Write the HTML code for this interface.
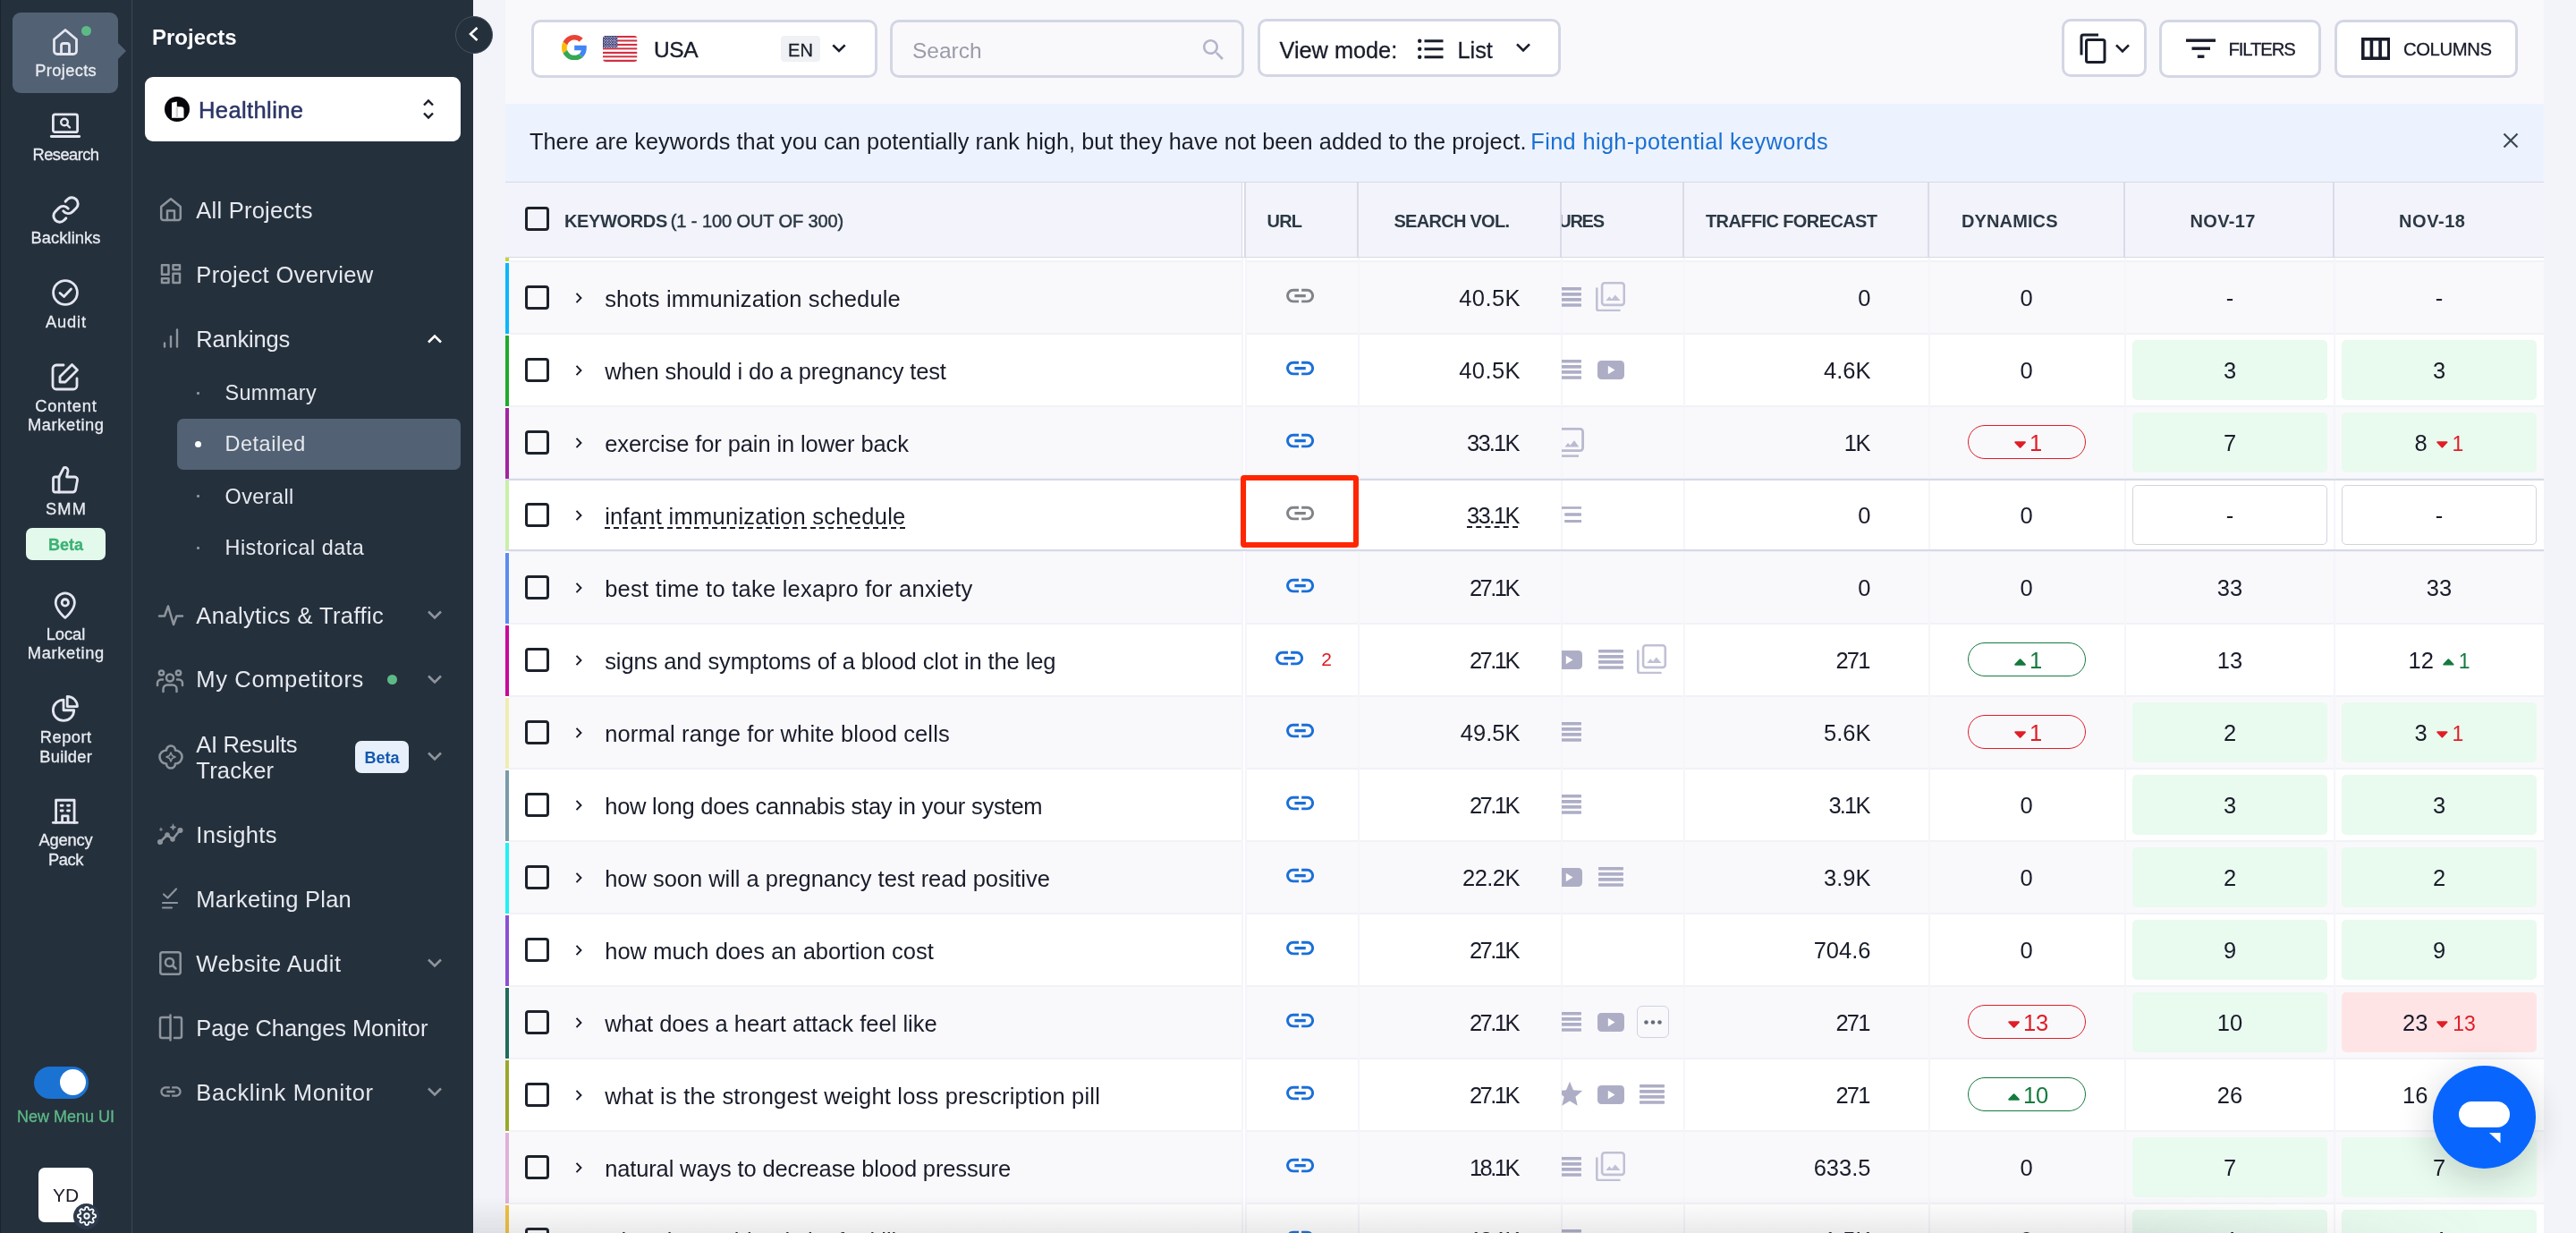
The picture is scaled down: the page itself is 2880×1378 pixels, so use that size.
<!DOCTYPE html>
<html lang="en"><head><meta charset="utf-8"><title>Rankings - Detailed</title>
<style>
*{box-sizing:border-box}
html,body{margin:0;padding:0}
body{width:2880px;height:1378px;overflow:hidden;position:relative;background:#f3f4f9;font-family:"Liberation Sans",sans-serif;color:#191c2a}
#wrap{position:absolute;left:0;top:0;width:2880px;height:1378px;overflow:hidden;will-change:transform;opacity:.9999}
.abs{position:absolute}
#nav1{position:absolute;left:0;top:0;width:147px;height:1378px;background:#25303d;border-left:1px solid #1b232d}
#navline{position:absolute;left:147px;top:0;width:1px;height:1378px;background:#3b4754}
#nav2{position:absolute;left:148px;top:0;width:381px;height:1378px;background:#25303d}
.il{position:absolute;left:0;width:147px;text-align:center;color:#e9ecf1;-webkit-text-stroke-width:.3px;font-size:18.500px;line-height:22px;white-space:nowrap}
.mi{position:absolute;left:219.300px;color:#e6e9ee;font-size:25.500px;line-height:30px;white-space:nowrap}
.si{position:absolute;left:251.500px;color:#e6e9ee;font-size:23.400px;line-height:28px;white-space:nowrap}
#main{position:absolute;left:565px;top:0;width:2279px;height:1378px;background:#f9f9fc;overflow:hidden}
.tbox{position:absolute;border:3px solid #d3d6e4;border-radius:9px;background:#fff}
.row{position:absolute;left:569px;width:2275px;height:79px}
.sep{position:absolute;left:569px;width:2275px;height:2px;background:#f1f2f7}
.bar{position:absolute;left:565px;width:4px;height:79px}
.cb{position:absolute;left:587.200px;width:27px;height:27px;border:3px solid #1c212b;border-radius:4px}
.kw{position:absolute;left:676.200px;font-size:25.500px;line-height:38px;white-space:nowrap;color:#191c2a}
.sv{position:absolute;left:1530px;width:168.500px;text-align:right;font-size:25.500px;line-height:38px;white-space:nowrap}
.tf{position:absolute;left:1890px;width:201.500px;text-align:right;font-size:25.500px;line-height:38px;white-space:nowrap}
.dy{position:absolute;left:2156px;width:219px;white-space:nowrap;text-align:center;font-size:25.500px;line-height:38px}
.pill{position:absolute;left:2200px;width:132px;height:38px;border:1.500px solid;border-radius:19px}
.cell{position:absolute;width:218px;height:67px;border-radius:5px}
.cellt{position:absolute;width:218px;text-align:center;font-size:25.500px;line-height:38px;white-space:nowrap}
.chg{font-size:23px;margin-left:10px}
.two{position:absolute;left:1473px;width:20px;text-align:center;color:#e0161e;font-size:21px;line-height:28px}
.fclip{position:absolute;left:1746px;width:135px;height:80px;overflow:hidden}
.hov{text-decoration:underline dashed;text-decoration-thickness:2px;text-underline-offset:3px}
.vline{position:absolute;top:288px;width:2px;height:1090px;background:#f5f5fa}
.hl{position:absolute;top:204px;width:2px;height:83px;background:#d9dbe7}
.th{position:absolute;top:233px;font-size:19px;font-weight:700;line-height:26px;color:#2b3944;white-space:nowrap}
</style></head><body>
<div id="wrap">

<!-- ===== icon bar ===== -->
<div id="nav1"></div><div id="navline"></div><div id="nav2"></div>
<div class="abs" style="left:14px;top:14px;width:118px;height:90px;border-radius:9px;background:#526173"></div>
<svg class="abs" style="left:131px;top:47px" width="11" height="20" viewBox="0 0 11 20"><path d="M0 0 L10 10 L0 20Z" fill="#526173"/></svg>
<div class="abs" style="left:91px;top:29px;width:11px;height:11px;border-radius:50%;background:#5dba87"></div>
<svg style="position:absolute;left:58px;top:31px" width="30" height="32" viewBox="0 0 30 32" fill="none" stroke="#e4e6f0" stroke-width="2.8" stroke-linecap="round" stroke-linejoin="round" ><path d="M2.500 13 L15 2.500 L27.500 13 V26 a3.500 3.500 0 0 1 -3.500 3.500 H6 a3.500 3.500 0 0 1 -3.500 -3.500 Z"/><path d="M10.500 29 V20 a2.500 2.500 0 0 1 2.500 -2.500 h4 a2.500 2.500 0 0 1 2.500 2.500 V29"/></svg>
<svg style="position:absolute;left:55px;top:124px" width="36" height="31" viewBox="0 0 36 31" fill="none" stroke="#e4e6f0" stroke-width="2.8" stroke-linecap="round" stroke-linejoin="round" ><rect x="4.400" y="3.900" width="27.200" height="19.800" rx="2"/><path d="M2.300 28.500 H33.700"/><circle cx="17" cy="12.500" r="3.800" stroke-width="2.400"/><path d="M20 15.500 L23 18.500" stroke-width="2.400"/></svg>
<svg style="position:absolute;left:56.5px;top:217.5px" width="33" height="33" viewBox="0 0 24 24" fill="none" stroke="#e4e6f0" stroke-width="2.15" stroke-linecap="round" stroke-linejoin="round" ><path d="M10 13a5 5 0 0 0 7.540.540l3-3a5 5 0 0 0-7.070-7.070l-1.720 1.710"/><path d="M14 11a5 5 0 0 0-7.540-.540l-3 3a5 5 0 0 0 7.070 7.070l1.710-1.710"/></svg>
<svg style="position:absolute;left:56px;top:310px" width="34" height="34" viewBox="0 0 34 34" fill="none" stroke="#e4e6f0" stroke-width="2.8" stroke-linecap="round" stroke-linejoin="round" ><circle cx="17" cy="17" r="13.400"/><path d="M11 17.500 L15.500 21.500 L23.500 13"/></svg>
<svg style="position:absolute;left:56px;top:404px" width="34" height="34" viewBox="0 0 34 34" fill="none" stroke="#e4e6f0" stroke-width="2.8" stroke-linecap="round" stroke-linejoin="round" ><path d="M15 4 H7 a4 4 0 0 0 -4 4 V27 a4 4 0 0 0 4 4 H26 a4 4 0 0 0 4 -4 V19"/><path d="M24.500 3.500 L30.500 9.500 L17 23 H11 V17 Z"/></svg>
<svg style="position:absolute;left:56px;top:519px" width="34" height="34" viewBox="0 0 34 34" fill="none" stroke="#e4e6f0" stroke-width="2.8" stroke-linecap="round" stroke-linejoin="round" ><path d="M3.500 16 a2 2 0 0 1 2 -2 H10 V31 H5.500 a2 2 0 0 1 -2 -2 Z"/><path d="M10 14 L15.500 3.500 a3.500 3.500 0 0 1 4.500 4 L18.500 14 H27.500 a3 3 0 0 1 3 3.600 L28.500 28.400 a3.300 3.300 0 0 1 -3.200 2.600 H10"/></svg>
<div class="abs" style="left:29px;top:590px;width:89px;height:36px;border-radius:7px;background:#e3f9ec"></div>
<svg style="position:absolute;left:59.2px;top:661.3px" width="27.6" height="31.3" viewBox="0 0 30 34" fill="none" stroke="#e4e6f0" stroke-width="3" stroke-linecap="round" stroke-linejoin="round" ><path d="M15 32 C15 32 26.500 22.500 26.500 13.500 a11.500 11.500 0 0 0 -23 0 C3.500 22.500 15 32 15 32 Z"/><circle cx="15" cy="13.500" r="4"/></svg>
<svg style="position:absolute;left:57.3px;top:776.1px" width="31.8" height="31.8" viewBox="0 0 34 34" fill="none" stroke="#e4e6f0" stroke-width="3" stroke-linecap="round" stroke-linejoin="round" ><path d="M15 6.500 A12.500 12.500 0 1 0 27.500 19 H15 Z"/><path d="M19.500 2.500 A12 12 0 0 1 31.500 14.500 H19.500 Z"/></svg>
<svg style="position:absolute;left:57.3px;top:891.2px" width="31.7" height="31.7" viewBox="0 0 34 34" fill="none" stroke="#e4e6f0" stroke-width="3" stroke-linecap="round" stroke-linejoin="round" ><path d="M6 30.500 V3.500 H28 V30.500"/><path d="M2.500 30.500 H31.500"/><path d="M13.500 30 V22.500 H20.500 V30"/><path d="M12 10 h2 M20 10 h2 M12 16 h2 M20 16 h2" stroke-width="3.200"/></svg>
<div class="il" style="top:68.06px;font-size:18.300px;letter-spacing:0.350px;padding-left:0.35px">Projects</div>
<div class="il" style="top:161.86px;font-size:18.300px;letter-spacing:-0.536px;padding-left:0.00px">Research</div>
<div class="il" style="top:254.86px;font-size:18.300px;letter-spacing:0.085px;padding-left:0.09px">Backlinks</div>
<div class="il" style="top:348.86px;font-size:18.300px;letter-spacing:0.857px;padding-left:0.86px">Audit</div>
<div class="il" style="top:443.16px;font-size:18.300px;letter-spacing:0.745px;padding-left:0.74px">Content</div>
<div class="il" style="top:464.06px;font-size:18.300px;letter-spacing:0.602px;padding-left:0.60px">Marketing</div>
<div class="il" style="top:557.66px;font-size:18.300px;letter-spacing:1.222px;padding-left:1.22px">SMM</div>
<div class="il" style="top:697.86px;font-size:18.300px;letter-spacing:-0.005px;padding-left:0.00px">Local</div>
<div class="il" style="top:719.46px;font-size:18.300px;letter-spacing:0.652px;padding-left:0.65px">Marketing</div>
<div class="il" style="top:812.86px;font-size:18.300px;letter-spacing:0.485px;padding-left:0.48px">Report</div>
<div class="il" style="top:834.56px;font-size:18.300px;letter-spacing:0.266px;padding-left:0.27px">Builder</div>
<div class="il" style="top:927.86px;font-size:18.300px;letter-spacing:-0.137px;padding-left:0.00px">Agency</div>
<div class="il" style="top:949.86px;font-size:18.300px;letter-spacing:-0.385px;padding-left:0.00px">Pack</div>
<div class="il" style="top:598.06px;font-size:18px;font-weight:700;color:#3bb273">Beta</div>
<div class="abs" style="left:38px;top:1191.500px;width:61px;height:36.500px;border-radius:19px;background:#1a73d2"></div>
<div class="abs" style="left:66.700px;top:1194.500px;width:29.600px;height:29.600px;border-radius:50%;background:#fff"></div>
<div class="il" style="top:1237.16px;font-size:18px;color:#5dba87">New Menu UI</div>
<div class="abs" style="left:43px;top:1305px;width:61px;height:61px;border-radius:7px;background:#fff"></div>
<div class="abs" style="left:43px;width:61px;text-align:center;top:1323.02px;font-size:21px;line-height:26px;color:#191c2a">YD</div>
<div class="abs" style="left:82px;top:1344.500px;width:29px;height:29px;border-radius:50%;background:#2d3a4c"></div>
<svg style="position:absolute;left:85.5px;top:1348px" width="22" height="22" viewBox="0 0 24 24" fill="none" stroke="#fff" stroke-width="2" stroke-linecap="round" stroke-linejoin="round" ><path d="M19.400 15a1.650 1.650 0 0 0 .330 1.820l.060.060a2 2 0 1 1-2.830 2.830l-.060-.060a1.650 1.650 0 0 0-1.820-.330 1.650 1.650 0 0 0-1 1.510V21a2 2 0 0 1-4 0v-.090A1.650 1.650 0 0 0 9 19.400a1.650 1.650 0 0 0-1.820.330l-.060.060a2 2 0 1 1-2.830-2.830l.060-.060a1.650 1.650 0 0 0 .330-1.820 1.650 1.650 0 0 0-1.510-1H3a2 2 0 0 1 0-4h.090A1.650 1.650 0 0 0 4.600 9a1.650 1.650 0 0 0-.330-1.820l-.060-.060a2 2 0 1 1 2.830-2.830l.060.060a1.650 1.650 0 0 0 1.820.330H9a1.650 1.650 0 0 0 1-1.510V3a2 2 0 0 1 4 0v.090a1.650 1.650 0 0 0 1 1.510 1.650 1.650 0 0 0 1.820-.330l.060-.060a2 2 0 1 1 2.830 2.830l-.060.060a1.650 1.650 0 0 0-.330 1.820V9a1.650 1.650 0 0 0 1.510 1H21a2 2 0 0 1 0 4h-.090a1.650 1.650 0 0 0-1.510 1z"/><circle cx="12" cy="12" r="3"/></svg>
<div class="abs" style="left:170px;top:27.48px;font-size:24px;line-height:30px;font-weight:700;color:#fff">Projects</div>
<div class="abs" style="left:509px;top:18px;width:42px;height:42px;border-radius:50%;background:#25303d;border:1px solid #46525f"></div>
<svg class="abs" style="left:523px;top:29px" width="13" height="18" viewBox="0 0 13 18" fill="none" stroke="#fff" stroke-width="2.600"><path d="M10.500 2 L3 9 L10.500 16"/></svg>
<div class="abs" style="left:162px;top:86px;width:353px;height:72px;border-radius:9px;background:#fff"></div>
<div class="abs" style="left:184px;top:107.600px;width:28px;height:28px;border-radius:50%;background:#05070a"></div>
<svg class="abs" style="left:184px;top:107.600px" width="28" height="28" viewBox="0 0 28 28"><path d="M8 6.800 L13.800 5.600 V11.300 H18.300 a3.200 3.200 0 0 1 3.200 3.200 V23.800 H8Z" fill="#fff"/><path d="M12.600 12 H15 V23.800 H12.600Z" fill="#d4d4d4"/></svg>
<div class="abs" style="left:222px;top:106.86px;font-size:25.500px;line-height:32px;color:#2c3566;letter-spacing:.4px;-webkit-text-stroke:.5px #2c3566">Healthline</div>
<svg class="abs" style="left:471.200px;top:109px" width="16" height="26" viewBox="0 0 16 26" fill="none" stroke="#191c2a" stroke-width="2.400"><path d="M3 8.500 L8 3.500 L13 8.500 M3 17.500 L8 22.500 L13 17.500"/></svg>
<div class="abs" style="left:198px;top:468px;width:317px;height:57px;border-radius:7px;background:#526173"></div>
<div class="mi" style="top:220.06px;letter-spacing:0.241px">All Projects</div>
<div class="mi" style="top:292.06px;letter-spacing:0.338px">Project Overview</div>
<div class="mi" style="top:364.06px;letter-spacing:-0.202px">Rankings</div>
<div class="mi" style="top:672.86px;letter-spacing:0.406px">Analytics &amp; Traffic</div>
<div class="mi" style="top:744.36px;letter-spacing:0.650px">My Competitors</div>
<div class="mi" style="top:816.96px;letter-spacing:-0.347px">AI Results</div>
<div class="mi" style="top:846.16px;letter-spacing:0.219px">Tracker</div>
<div class="mi" style="top:918.16px;letter-spacing:0.316px">Insights</div>
<div class="mi" style="top:989.76px;letter-spacing:0.262px">Marketing Plan</div>
<div class="mi" style="top:1061.76px;letter-spacing:0.521px">Website Audit</div>
<div class="mi" style="top:1133.86px;letter-spacing:-0.091px">Page Changes Monitor</div>
<div class="mi" style="top:1205.86px;letter-spacing:0.715px">Backlink Monitor</div>
<div class="si" style="top:425.49px;letter-spacing:0.354px">Summary</div>
<div class="si" style="top:482.29px;letter-spacing:0.567px">Detailed</div>
<div class="si" style="top:540.69px;letter-spacing:0.451px">Overall</div>
<div class="si" style="top:597.79px;letter-spacing:0.500px">Historical data</div>
<div class="abs" style="left:220px;top:437.7px;width:3px;height:3px;background:#8a94a6;border-radius:1px"></div>
<div class="abs" style="left:220px;top:552.9px;width:3px;height:3px;background:#8a94a6;border-radius:1px"></div>
<div class="abs" style="left:220px;top:610.5px;width:3px;height:3px;background:#8a94a6;border-radius:1px"></div>
<div class="abs" style="left:217.700px;top:492.900px;width:7.400px;height:7.400px;border-radius:50%;background:#fff"></div>
<svg class="abs" style="left:477px;top:373px" width="18" height="12" viewBox="0 0 18 12" fill="none" stroke="#fff" stroke-width="2.600"><path d="M2 9.500 L9 2.500 L16 9.500"/></svg>
<svg style="position:absolute;left:477px;top:681px" width="18" height="12" viewBox="0 0 18 12" fill="none" stroke="#8d949c" stroke-width="2.600"><path d="M2 2.500 L9 9.500 L16 2.500"/></svg>
<svg style="position:absolute;left:477px;top:752.6px" width="18" height="12" viewBox="0 0 18 12" fill="none" stroke="#8d949c" stroke-width="2.600"><path d="M2 2.500 L9 9.500 L16 2.500"/></svg>
<svg style="position:absolute;left:477px;top:838.7px" width="18" height="12" viewBox="0 0 18 12" fill="none" stroke="#8d949c" stroke-width="2.600"><path d="M2 2.500 L9 9.500 L16 2.500"/></svg>
<svg style="position:absolute;left:477px;top:1070px" width="18" height="12" viewBox="0 0 18 12" fill="none" stroke="#8d949c" stroke-width="2.600"><path d="M2 2.500 L9 9.500 L16 2.500"/></svg>
<svg style="position:absolute;left:477px;top:1214px" width="18" height="12" viewBox="0 0 18 12" fill="none" stroke="#8d949c" stroke-width="2.600"><path d="M2 2.500 L9 9.500 L16 2.500"/></svg>
<div class="abs" style="left:432.700px;top:753.800px;width:11.600px;height:11.600px;border-radius:50%;background:#5dba87"></div>
<div class="abs" style="left:397px;top:828px;width:60px;height:36px;border-radius:7px;background:#e7f0fb"></div>
<div class="abs" style="left:397px;width:60px;text-align:center;top:835.56px;font-size:18px;line-height:22px;font-weight:700;color:#1258b0">Beta</div>
<svg style="position:absolute;left:178px;top:220px" width="26" height="28" viewBox="0 0 26 28" fill="none" stroke="#8d949c" stroke-width="2.5" stroke-linecap="round" stroke-linejoin="round" ><path d="M2.200 11 L13 2.200 L23.800 11 V23.500 a2.500 2.500 0 0 1 -2.500 2.500 H4.700 a2.500 2.500 0 0 1 -2.500 -2.500 Z"/><path d="M9 26 V15.500 H17 V26"/></svg>
<svg style="position:absolute;left:179px;top:294px" width="24" height="24" viewBox="0 0 24 24" fill="none" stroke="#8d949c" stroke-width="2.5" stroke-linecap="round" stroke-linejoin="round" stroke-linejoin="miter"><rect x="2" y="2.200" width="7.500" height="10.600"/><rect x="14.500" y="2.200" width="7.500" height="5"/><rect x="14.500" y="11.700" width="7.500" height="10.300"/><rect x="2" y="17.300" width="7.500" height="4.700"/></svg>
<svg style="position:absolute;left:181px;top:366px" width="20" height="24" viewBox="0 0 20 24" fill="none" stroke="#8d949c" stroke-width="2.4" stroke-linecap="round" stroke-linejoin="round" stroke-linecap="butt"><path d="M3 17.500 V21.500 M10 10 V21.500 M17 2.500 V21.500"/></svg>
<svg style="position:absolute;left:176px;top:674px" width="30" height="28" viewBox="0 0 30 28" fill="none" stroke="#8d949c" stroke-width="2.5" stroke-linecap="round" stroke-linejoin="round" ><path d="M2 14.500 H8 L12 3.500 L18 24 L21.500 14.500 H28"/></svg>
<svg style="position:absolute;left:174px;top:747px" width="32" height="28" viewBox="0 0 32 28" fill="none" stroke="#8d949c" stroke-width="2.5" stroke-linecap="round" stroke-linejoin="round" ><circle cx="16" cy="10.500" r="4"/><path d="M8.500 26 V23 a4.500 4.500 0 0 1 4.500 -4.500 h6 a4.500 4.500 0 0 1 4.500 4.500 V26"/><circle cx="6.500" cy="5" r="2.600"/><circle cx="25.500" cy="5" r="2.600"/><path d="M2 19 V16.500 a4 4 0 0 1 4 -4 H8"/><path d="M30 19 V16.500 a4 4 0 0 0 -4 -4 H24"/></svg>
<svg style="position:absolute;left:176px;top:831px" width="30" height="30" viewBox="0 0 30 30" fill="none" stroke="#8d949c" stroke-width="2.8" stroke-linecap="round" stroke-linejoin="round" ><path d="M15 2.500 a5 5 0 0 1 5 5 a5 5 0 0 1 0 15 a5 5 0 0 1 -10 0 a5 5 0 0 1 0 -15 a5 5 0 0 1 5 -5 Z" stroke-width="2.600"/><path d="M15 10 L16.500 13.500 L20 15 L16.500 16.500 L15 20 L13.500 16.500 L10 15 L13.500 13.500 Z" stroke-width="1.600"/></svg>
<svg style="position:absolute;left:175px;top:919px" width="32" height="26" viewBox="0 0 32 26" fill="none" stroke="#8d949c" stroke-width="2.5" stroke-linecap="round" stroke-linejoin="round" ><path d="M4 22 L12 14 L18 19 L26 9"/><circle cx="4" cy="22" r="1.800" fill="#8d949c"/><circle cx="12" cy="14" r="1.500" fill="#8d949c"/><circle cx="18" cy="19" r="1.500" fill="#8d949c"/><circle cx="26.500" cy="9" r="1.800" fill="#8d949c"/><path d="M18.500 2 L19.500 4.500 L22 5.500 L19.500 6.500 L18.500 9 L17.500 6.500 L15 5.500 L17.500 4.500Z" fill="#8d949c" stroke-width="0.600"/><path d="M5 6 L5.600 7.400 L7 8 L5.600 8.600 L5 10 L4.400 8.600 L3 8 L4.400 7.400Z" fill="#8d949c" stroke-width="0.400"/></svg>
<svg style="position:absolute;left:180px;top:990px" width="20" height="28" viewBox="0 0 20 28" fill="none" stroke="#8d949c" stroke-width="2.2" stroke-linecap="round" stroke-linejoin="round" stroke-linecap="butt"><path d="M3 9.500 L7.500 13.500 L17 3.500" /><path d="M2 19 H18 M2 24.500 H12"/></svg>
<svg style="position:absolute;left:177px;top:1062px" width="27" height="29" viewBox="0 0 27 29" fill="none" stroke="#8d949c" stroke-width="2.5" stroke-linecap="round" stroke-linejoin="round" ><rect x="2.300" y="2.300" width="22.400" height="24.400" rx="2.500"/><circle cx="12.500" cy="13.500" r="4.600"/><path d="M16 17 L19.500 20.500"/></svg>
<svg style="position:absolute;left:177px;top:1133px" width="28" height="31" viewBox="0 0 28 31" fill="none" stroke="#8d949c" stroke-width="2.5" stroke-linecap="round" stroke-linejoin="round" ><path d="M13.500 4 H4 a2 2 0 0 0 -2 2 V25 a2 2 0 0 0 2 2 H13.500 M13.500 1.500 V29.500 M18 4 H24 a2 2 0 0 1 2 2 V25 a2 2 0 0 1 -2 2 H18"/></svg>
<svg class="abs" style="left:176.900px;top:1206px" width="28" height="28" viewBox="0 0 24 24"><path fill="#8d949c" d="M3.9 12c0-1.71 1.39-3.1 3.1-3.1h4V7H7c-2.76 0-5 2.240-5 5s2.240 5 5 5h4v-1.900H7c-1.710 0-3.100-1.390-3.100-3.100zM8 13h8v-2H8v2zm9-6h-4v1.900h4c1.710 0 3.100 1.390 3.100 3.100s-1.390 3.100-3.100 3.100h-4V17h4c2.760 0 5-2.240 5-5s-2.240-5-5-5z"/></svg>

<!-- ===== main ===== -->
<div id="main"></div>
<div class="abs" style="left:594px;top:22px;width:387px;height:65px;border:3px solid #d3d6e4;border-radius:10px;background:#fff"></div>
<svg class="abs" style="left:628px;top:39px" width="28.400" height="28.400" viewBox="0 0 48 48"><path fill="#EA4335" d="M24 9.500c3.540 0 6.710 1.220 9.210 3.600l6.850-6.850C35.900 2.380 30.470 0 24 0 14.620 0 6.510 5.380 2.560 13.220l7.980 6.190C12.430 13.720 17.740 9.500 24 9.500z"/><path fill="#4285F4" d="M46.980 24.550c0-1.570-.150-3.090-.380-4.550H24v9.020h12.940c-.580 2.960-2.260 5.480-4.780 7.180l7.730 6c4.510-4.180 7.090-10.360 7.090-17.650z"/><path fill="#FBBC05" d="M10.530 28.590c-.480-1.450-.760-2.990-.760-4.590s.270-3.140.760-4.590l-7.980-6.190C.920 16.460 0 20.120 0 24c0 3.880.920 7.540 2.560 10.780l7.970-6.190z"/><path fill="#34A853" d="M24 48c6.480 0 11.930-2.130 15.890-5.810l-7.730-6c-2.150 1.450-4.920 2.300-8.160 2.300-6.260 0-11.570-4.220-13.470-9.910l-7.980 6.190C6.510 42.620 14.620 48 24 48z"/></svg>
<svg class="abs" style="left:674px;top:40px" width="38.500" height="29" viewBox="0 0 38.5 29"><defs><clipPath id="fc"><rect width="38.500" height="29" rx="3.500"/></clipPath></defs><g clip-path="url(#fc)"><rect x="0" y="0.000" width="38.500" height="2.231" fill="#d22f42"/><rect x="0" y="2.231" width="38.500" height="2.231" fill="#fff"/><rect x="0" y="4.462" width="38.500" height="2.231" fill="#d22f42"/><rect x="0" y="6.692" width="38.500" height="2.231" fill="#fff"/><rect x="0" y="8.923" width="38.500" height="2.231" fill="#d22f42"/><rect x="0" y="11.154" width="38.500" height="2.231" fill="#fff"/><rect x="0" y="13.385" width="38.500" height="2.231" fill="#d22f42"/><rect x="0" y="15.615" width="38.500" height="2.231" fill="#fff"/><rect x="0" y="17.846" width="38.500" height="2.231" fill="#d22f42"/><rect x="0" y="20.077" width="38.500" height="2.231" fill="#fff"/><rect x="0" y="22.308" width="38.500" height="2.231" fill="#d22f42"/><rect x="0" y="24.538" width="38.500" height="2.231" fill="#fff"/><rect x="0" y="26.769" width="38.500" height="2.231" fill="#d22f42"/><rect width="16.300" height="13.500" fill="#46467f"/><circle cx="1.60" cy="1.30" r="0.550" fill="#fff"/><circle cx="4.30" cy="1.30" r="0.550" fill="#fff"/><circle cx="7.00" cy="1.30" r="0.550" fill="#fff"/><circle cx="9.70" cy="1.30" r="0.550" fill="#fff"/><circle cx="12.40" cy="1.30" r="0.550" fill="#fff"/><circle cx="15.10" cy="1.30" r="0.550" fill="#fff"/><circle cx="2.95" cy="2.75" r="0.550" fill="#fff"/><circle cx="5.65" cy="2.75" r="0.550" fill="#fff"/><circle cx="8.35" cy="2.75" r="0.550" fill="#fff"/><circle cx="11.05" cy="2.75" r="0.550" fill="#fff"/><circle cx="13.75" cy="2.75" r="0.550" fill="#fff"/><circle cx="1.60" cy="4.20" r="0.550" fill="#fff"/><circle cx="4.30" cy="4.20" r="0.550" fill="#fff"/><circle cx="7.00" cy="4.20" r="0.550" fill="#fff"/><circle cx="9.70" cy="4.20" r="0.550" fill="#fff"/><circle cx="12.40" cy="4.20" r="0.550" fill="#fff"/><circle cx="15.10" cy="4.20" r="0.550" fill="#fff"/><circle cx="2.95" cy="5.65" r="0.550" fill="#fff"/><circle cx="5.65" cy="5.65" r="0.550" fill="#fff"/><circle cx="8.35" cy="5.65" r="0.550" fill="#fff"/><circle cx="11.05" cy="5.65" r="0.550" fill="#fff"/><circle cx="13.75" cy="5.65" r="0.550" fill="#fff"/><circle cx="1.60" cy="7.10" r="0.550" fill="#fff"/><circle cx="4.30" cy="7.10" r="0.550" fill="#fff"/><circle cx="7.00" cy="7.10" r="0.550" fill="#fff"/><circle cx="9.70" cy="7.10" r="0.550" fill="#fff"/><circle cx="12.40" cy="7.10" r="0.550" fill="#fff"/><circle cx="15.10" cy="7.10" r="0.550" fill="#fff"/><circle cx="2.95" cy="8.55" r="0.550" fill="#fff"/><circle cx="5.65" cy="8.55" r="0.550" fill="#fff"/><circle cx="8.35" cy="8.55" r="0.550" fill="#fff"/><circle cx="11.05" cy="8.55" r="0.550" fill="#fff"/><circle cx="13.75" cy="8.55" r="0.550" fill="#fff"/><circle cx="1.60" cy="10.00" r="0.550" fill="#fff"/><circle cx="4.30" cy="10.00" r="0.550" fill="#fff"/><circle cx="7.00" cy="10.00" r="0.550" fill="#fff"/><circle cx="9.70" cy="10.00" r="0.550" fill="#fff"/><circle cx="12.40" cy="10.00" r="0.550" fill="#fff"/><circle cx="15.10" cy="10.00" r="0.550" fill="#fff"/><circle cx="2.95" cy="11.45" r="0.550" fill="#fff"/><circle cx="5.65" cy="11.45" r="0.550" fill="#fff"/><circle cx="8.35" cy="11.45" r="0.550" fill="#fff"/><circle cx="11.05" cy="11.45" r="0.550" fill="#fff"/><circle cx="13.75" cy="11.45" r="0.550" fill="#fff"/><circle cx="1.60" cy="12.90" r="0.550" fill="#fff"/><circle cx="4.30" cy="12.90" r="0.550" fill="#fff"/><circle cx="7.00" cy="12.90" r="0.550" fill="#fff"/><circle cx="9.70" cy="12.90" r="0.550" fill="#fff"/><circle cx="12.40" cy="12.90" r="0.550" fill="#fff"/><circle cx="15.10" cy="12.90" r="0.550" fill="#fff"/></g></svg>
<div class="abs" style="left:731px;top:40.11px;font-size:24.500px;line-height:32px;color:#191c2a;letter-spacing:-.4px;-webkit-text-stroke-width:.35px">USA</div>
<div class="abs" style="left:873px;top:40px;width:44px;height:29px;border-radius:4px;background:#f0f1f5"></div>
<div class="abs" style="left:873px;width:44px;text-align:center;top:42.57px;font-size:20px;line-height:26px;color:#191c2a;-webkit-text-stroke-width:.3px">EN</div>
<svg class="abs" style="left:929.300px;top:48px" width="18" height="12" viewBox="0 0 18 12" fill="none" stroke="#191c2a" stroke-width="2.600"><path d="M2.300 2.300 L9 9 L15.700 2.300"/></svg>
<div class="abs" style="left:995px;top:22px;width:396px;height:64.500px;border:3px solid #d3d6e4;border-radius:10px;"></div>
<div class="abs" style="left:1020px;top:40.61px;font-size:24.500px;line-height:32px;color:#9a9ca8">Search</div>
<svg class="abs" style="left:1341px;top:40.300px" width="31.500" height="31.500" viewBox="0 0 24 24"><path fill="#b3b5cb" d="M15.500 14h-.790l-.280-.270C15.410 12.590 16 11.110 16 9.500 16 5.910 13.090 3 9.500 3S3 5.910 3 9.500 5.910 16 9.500 16c1.610 0 3.090-.590 4.230-1.570l.270.280v.790l5 4.990L20.490 19l-4.990-5zm-6 0C7.010 14 5 11.990 5 9.500S7.010 5 9.500 5 14 7.010 14 9.500 11.990 14 9.500 14z"/></svg>
<div class="abs" style="left:1406px;top:21px;width:338.500px;height:64.500px;border:3px solid #d3d6e4;border-radius:10px;background:#fff"></div>
<div class="abs" style="left:1430.500px;top:40.33px;font-size:25.300px;line-height:32px;color:#191c2a;-webkit-text-stroke-width:.3px">View mode:</div>
<svg class="abs" style="left:1584.500px;top:43px" width="29" height="24" viewBox="0 0 29 24" fill="#191c2a"><circle cx="2.200" cy="2.800" r="2.200"/><circle cx="2.200" cy="11.800" r="2.200"/><circle cx="2.200" cy="20.800" r="2.200"/><rect x="7.500" y="1.300" width="21" height="3"/><rect x="7.500" y="10.300" width="21" height="3"/><rect x="7.500" y="19.300" width="21" height="3"/></svg>
<div class="abs" style="left:1629.500px;top:40.33px;font-size:25.300px;line-height:32px;color:#191c2a;-webkit-text-stroke-width:.3px">List</div>
<svg class="abs" style="left:1694px;top:47px" width="18" height="12" viewBox="0 0 18 12" fill="none" stroke="#191c2a" stroke-width="2.600"><path d="M2 2.300 L9 9.300 L16 2.300"/></svg>
<div class="abs" style="left:2305px;top:21px;width:94.500px;height:64.500px;border:3px solid #d3d6e4;border-radius:10px;background:#fff"></div>
<svg class="abs" style="left:2324px;top:36px" width="32" height="36" viewBox="0 0 32 36" fill="none" stroke="#191c2a" stroke-width="3"><rect x="8.500" y="8.500" width="20.500" height="25" rx="2"/><path d="M3 25.500 V5 a2 2 0 0 1 2 -2 H22"/></svg>
<svg class="abs" style="left:2364.200px;top:48px" width="18" height="12" viewBox="0 0 18 12" fill="none" stroke="#191c2a" stroke-width="2.600"><path d="M2 2.300 L9 9.300 L16 2.300"/></svg>
<div class="abs" style="left:2414px;top:22px;width:180.500px;height:64.500px;border:3px solid #d3d6e4;border-radius:10px;background:#fff"></div>
<svg class="abs" style="left:2443.500px;top:43px" width="33" height="23" viewBox="0 0 33 23" fill="#191c2a"><rect x="0" y="0.500" width="33" height="3.400"/><rect x="6.500" y="9.500" width="20.500" height="3.400"/><rect x="12.800" y="18.500" width="7.600" height="3.400"/></svg>
<div class="abs" style="left:2491.500px;top:42.17px;font-size:20.300px;line-height:26px;color:#191c2a;letter-spacing:-1.100px;-webkit-text-stroke-width:.3px">FILTERS</div>
<div class="abs" style="left:2610px;top:22px;width:205px;height:64.500px;border:3px solid #d3d6e4;border-radius:10px;background:#fff"></div>
<svg class="abs" style="left:2639.500px;top:42px" width="32.500" height="25" viewBox="0 0 32.5 25" fill="none" stroke="#191c2a" stroke-width="3.600"><rect x="1.800" y="1.800" width="28.900" height="21.400"/><path d="M11.400 2 V23 M21.100 2 V23"/></svg>
<div class="abs" style="left:2687px;top:42.17px;font-size:20.300px;line-height:26px;color:#191c2a;letter-spacing:-.4px;-webkit-text-stroke-width:.3px">COLUMNS</div>
<!-- banner -->
<div class="abs" style="left:565px;top:116px;width:2279px;height:87px;background:#edf3fe"></div>
<div class="abs" style="left:592px;top:142.23px;font-size:25.3px;line-height:32px;letter-spacing:0.050px;color:#191c2a;white-space:nowrap;">There are keywords that you can potentially rank high, but they have not been added to the project.</div>
<div class="abs" style="left:1711.3px;top:142.23px;font-size:25.3px;line-height:32px;letter-spacing:0.381px;color:#1a70d3;white-space:nowrap;">Find high-potential keywords</div>
<svg class="abs" style="left:2798px;top:148px" width="18" height="18" viewBox="0 0 18 18" stroke="#3c4855" stroke-width="2.200" fill="none"><path d="M1.500 1.500 L16.500 16.500 M16.500 1.500 L1.500 16.500"/></svg>
<!-- table header -->
<div class="abs" style="left:565px;top:203px;width:2279px;height:85px;background:#f3f3fb;border-top:1px solid #d6d8e4;border-bottom:1px solid #d6d8e4"></div>
<div class="abs" style="left:565px;top:288px;width:2279px;height:3px;background:#fff"></div><div class="abs" style="left:565px;top:291px;width:2279px;height:2px;background:#f1f2f7"></div><div class="abs" style="left:565px;top:288px;width:4px;height:1090px;background:#fff"></div>
<div class="abs" style="left:565px;top:288px;width:4px;height:4px;background:#c0d72f"></div>
<div class="cb" style="top:231.200px"></div>

<div class="abs" style="left:631px;top:234.67px;font-size:20px;line-height:25px;font-weight:700;letter-spacing:-0.357px;color:#2b3944;white-space:nowrap;">KEYWORDS</div>
<div class="abs" style="left:749.8px;top:234.67px;font-size:20px;line-height:25px;letter-spacing:-0.093px;color:#2b3944;white-space:nowrap;-webkit-text-stroke-width:.5px;">(1 - 100 OUT OF 300)</div>
<div class="abs" style="left:1416.5px;top:234.67px;font-size:20px;line-height:25px;font-weight:700;letter-spacing:-0.805px;color:#2b3944;white-space:nowrap;">URL</div>
<div class="abs" style="left:1558.5px;top:234.67px;font-size:20px;line-height:25px;font-weight:700;letter-spacing:-0.719px;color:#2b3944;white-space:nowrap;">SEARCH VOL.</div>
<div class="abs" style="left:1746px;top:220px;width:60px;height:50px;overflow:hidden"><div class="abs" style="left:-49.5px;top:14.67px;font-size:20px;line-height:25px;font-weight:700;letter-spacing:-1.259px;color:#2b3944;white-space:nowrap;">FEATURES</div></div>
<div class="abs" style="left:1907px;top:234.67px;font-size:20px;line-height:25px;font-weight:700;letter-spacing:-0.606px;color:#2b3944;white-space:nowrap;">TRAFFIC FORECAST</div>
<div class="abs" style="left:2193px;top:234.67px;font-size:20px;line-height:25px;font-weight:700;letter-spacing:0.118px;color:#2b3944;white-space:nowrap;">DYNAMICS</div>
<div class="abs" style="left:2448.5px;top:234.67px;font-size:20px;line-height:25px;font-weight:700;letter-spacing:0.369px;color:#2b3944;white-space:nowrap;">NOV-17</div>
<div class="abs" style="left:2682px;top:234.67px;font-size:20px;line-height:25px;font-weight:700;letter-spacing:0.569px;color:#2b3944;white-space:nowrap;">NOV-18</div>
<div class="hl" style="left:1388px;width:1px"></div><div class="hl" style="left:1389px;background:#fcfcff"></div><div class="hl" style="left:1391px"></div><div class="hl" style="left:1517px"></div><div class="hl" style="left:1744px"></div><div class="hl" style="left:1881px"></div><div class="hl" style="left:2155px"></div><div class="hl" style="left:2374px"></div><div class="hl" style="left:2608px"></div>
<div class="row" style="top:293px;background:#f9f9fc"></div>
<div class="sep" style="top:372px"></div>
<div class="bar" style="top:294px;background:#0ab7fb"></div>
<div class="row" style="top:374px;background:#ffffff"></div>
<div class="sep" style="top:453px"></div>
<div class="bar" style="top:375px;background:#1faa2d"></div>
<div class="row" style="top:455px;background:#f9f9fc"></div>
<div class="sep" style="top:534px"></div>
<div class="bar" style="top:456px;background:#a3249f"></div>
<div class="row" style="top:536px;background:#ffffff"></div>
<div class="sep" style="top:615px"></div>
<div class="bar" style="top:537px;background:#c9f0a8"></div>
<div class="row" style="top:617px;background:#f9f9fc"></div>
<div class="sep" style="top:696px"></div>
<div class="bar" style="top:618px;background:#5b8def"></div>
<div class="row" style="top:698px;background:#ffffff"></div>
<div class="sep" style="top:777px"></div>
<div class="bar" style="top:699px;background:#c9089a"></div>
<div class="row" style="top:779px;background:#f9f9fc"></div>
<div class="sep" style="top:858px"></div>
<div class="bar" style="top:780px;background:#f0ecb0"></div>
<div class="row" style="top:860px;background:#ffffff"></div>
<div class="sep" style="top:939px"></div>
<div class="bar" style="top:861px;background:#7a9ba8"></div>
<div class="row" style="top:941px;background:#f9f9fc"></div>
<div class="sep" style="top:1020px"></div>
<div class="bar" style="top:942px;background:#22f0f0"></div>
<div class="row" style="top:1022px;background:#ffffff"></div>
<div class="sep" style="top:1101px"></div>
<div class="bar" style="top:1023px;background:#8a4fd6"></div>
<div class="row" style="top:1103px;background:#f9f9fc"></div>
<div class="sep" style="top:1182px"></div>
<div class="bar" style="top:1104px;background:#1f6b5c"></div>
<div class="row" style="top:1184px;background:#ffffff"></div>
<div class="sep" style="top:1263px"></div>
<div class="bar" style="top:1185px;background:#9aa82a"></div>
<div class="row" style="top:1265px;background:#f9f9fc"></div>
<div class="sep" style="top:1344px"></div>
<div class="bar" style="top:1266px;background:#e0b0d8"></div>
<div class="row" style="top:1346px;background:#ffffff"></div>
<div class="sep" style="top:1425px"></div>
<div class="bar" style="top:1347px;background:#f0c040"></div>
<!-- column lines -->
<div class="vline" style="left:1388px"></div>
<div class="vline" style="left:1390px;background:#fff"></div>
<div class="vline" style="left:1392px"></div>
<div class="vline" style="left:1518px"></div>
<div class="vline" style="left:1745px"></div>
<div class="vline" style="left:1882px"></div>
<div class="vline" style="left:2156px"></div>
<div class="vline" style="left:2375px"></div>
<div class="vline" style="left:2609px"></div>

<div class="cb" style="top:318.5px"></div>
<svg style="position:absolute;left:642.500px;top:325.5px" width="9" height="14" viewBox="0 0 9 14" fill="none" stroke="#191c2a" stroke-width="1.900"><path d="M1.500 1.800 L6.500 7 L1.500 12.200"/></svg>
<div class="kw" style="top:315.06px;letter-spacing:0.118px;">shots immunization schedule</div>
<svg style="position:absolute;left:1435.10px;top:312.40px" width="37.2" height="37.2" viewBox="0 0 24 24"><path fill="#808488" d="M3.9 12c0-1.71 1.39-3.1 3.1-3.1h4V7H7c-2.76 0-5 2.24-5 5s2.240 5 5 5h4v-1.900H7c-1.710 0-3.100-1.390-3.100-3.100zM8 13h8v-2H8v2zm9-6h-4v1.900h4c1.710 0 3.100 1.390 3.100 3.100s-1.390 3.100-3.100 3.100h-4V17h4c2.760 0 5-2.240 5-5s-2.240-5-5-5z"/></svg>
<div class="sv" style="top:314.26px;letter-spacing:0.390px;left:1531.39px">40.5K</div>
<div class="fclip" style="top:291px"><svg style="position:absolute;left:-6.0px;top:30.1px" width="28" height="22" viewBox="0 0 28 22" fill="#adaec6"><rect x="0" y="0.00" width="28" height="3.600" rx="0.800"/><rect x="0" y="6.05" width="28" height="3.600" rx="0.800"/><rect x="0" y="12.10" width="28" height="3.600" rx="0.800"/><rect x="0" y="18.15" width="28" height="3.600" rx="0.800"/></svg><svg style="position:absolute;left:37.9px;top:24.1px" width="33.2" height="33.4" viewBox="0 0 33.2 33.4" fill="none" stroke="#c0c1d5" stroke-width="2.600" stroke-linecap="round"><rect x="7.100" y="1.300" width="24.700" height="24.600" rx="3"/><path d="M1.300 7.500 V30 a2 2 0 0 0 2 2 H26.500"/><path d="M11.300 21.100 L15.300 16.200 L18 19.300 L21.800 14.600 L27.600 21.100Z" fill="#c0c1d5" stroke="none"/></svg></div>
<div class="tf" style="top:314.26px">0</div>
<div class="dy" style="top:314.26px">0</div>
<div class="cellt" style="left:2384px;top:314.26px"><span>-</span></div>
<div class="cellt" style="left:2618px;top:314.26px"><span>-</span></div>
<div class="cb" style="top:399.5px"></div>
<svg style="position:absolute;left:642.500px;top:406.5px" width="9" height="14" viewBox="0 0 9 14" fill="none" stroke="#191c2a" stroke-width="1.900"><path d="M1.500 1.800 L6.500 7 L1.500 12.200"/></svg>
<div class="kw" style="top:396.06px;letter-spacing:-0.166px;">when should i do a pregnancy test</div>
<svg style="position:absolute;left:1435.10px;top:393.40px" width="37.2" height="37.2" viewBox="0 0 24 24"><path fill="#1a6fd8" d="M3.9 12c0-1.71 1.39-3.1 3.1-3.1h4V7H7c-2.76 0-5 2.24-5 5s2.240 5 5 5h4v-1.900H7c-1.710 0-3.100-1.390-3.100-3.100zM8 13h8v-2H8v2zm9-6h-4v1.900h4c1.710 0 3.100 1.390 3.100 3.100s-1.390 3.100-3.100 3.100h-4V17h4c2.760 0 5-2.240 5-5s-2.240-5-5-5z"/></svg>
<div class="sv" style="top:395.26px;letter-spacing:0.390px;left:1531.39px">40.5K</div>
<div class="fclip" style="top:372px"><svg style="position:absolute;left:-6.0px;top:30.1px" width="28" height="22" viewBox="0 0 28 22" fill="#adaec6"><rect x="0" y="0.00" width="28" height="3.600" rx="0.800"/><rect x="0" y="6.05" width="28" height="3.600" rx="0.800"/><rect x="0" y="12.10" width="28" height="3.600" rx="0.800"/><rect x="0" y="18.15" width="28" height="3.600" rx="0.800"/></svg><svg style="position:absolute;left:39.5px;top:30.5px" width="30" height="21" viewBox="0 0 30 21"><rect width="30" height="21" rx="4.500" fill="#adaec6"/><path d="M11.800 5.800 L19.500 10.500 L11.800 15.200Z" fill="#fff"/></svg></div>
<div class="tf" style="top:395.26px">4.6K</div>
<div class="dy" style="top:395.26px">0</div>
<div class="cell" style="left:2384px;top:380.0px;background:#e9faef;"></div>
<div class="cellt" style="left:2384px;top:395.26px"><span>3</span></div>
<div class="cell" style="left:2618px;top:380.0px;background:#e9faef;"></div>
<div class="cellt" style="left:2618px;top:395.26px"><span>3</span></div>
<div class="cb" style="top:480.5px"></div>
<svg style="position:absolute;left:642.500px;top:487.5px" width="9" height="14" viewBox="0 0 9 14" fill="none" stroke="#191c2a" stroke-width="1.900"><path d="M1.500 1.800 L6.500 7 L1.500 12.200"/></svg>
<div class="kw" style="top:477.06px;letter-spacing:-0.107px;">exercise for pain in lower back</div>
<svg style="position:absolute;left:1435.10px;top:474.40px" width="37.2" height="37.2" viewBox="0 0 24 24"><path fill="#1a6fd8" d="M3.9 12c0-1.71 1.39-3.1 3.1-3.1h4V7H7c-2.76 0-5 2.24-5 5s2.240 5 5 5h4v-1.900H7c-1.710 0-3.100-1.390-3.100-3.100zM8 13h8v-2H8v2zm9-6h-4v1.900h4c1.710 0 3.100 1.390 3.100 3.100s-1.390 3.100-3.100 3.100h-4V17h4c2.760 0 5-2.240 5-5s-2.240-5-5-5z"/></svg>
<div class="sv" style="top:476.26px;letter-spacing:-1.810px;left:1529.19px">33.1K</div>
<div class="fclip" style="top:453px"><svg style="position:absolute;left:-6.5px;top:24.5px" width="32" height="34" viewBox="0 0 32 34" fill="none" stroke="#b9bacf" stroke-width="2.800"><rect x="1.400" y="1.400" width="28.200" height="24.200" rx="3"/><path d="M3 31.600 H25" stroke-width="2.600"/><path d="M9.500 21.500 L13 17 L15.500 19.800 L20 14.300 L25.300 21.500Z" fill="#b9bacf" stroke="none"/></svg></div>
<div class="tf" style="top:476.26px;letter-spacing:-1.403px;left:1888.60px">1K</div>
<div class="pill" style="top:475px;border-color:#e11d26"></div>
<div class="dy" style="top:476.26px;color:#e11d26;padding-left:4px"><svg width="13.2" height="8" viewBox="0 0 13 8" style="vertical-align:middle;margin-right:4px;position:relative;top:-1px"><path d="M1.200 1.200 H11.800 L6.500 6.800Z" fill="#e11d26" stroke="#e11d26" stroke-width="2" stroke-linejoin="round"/></svg>1</div>
<div class="cell" style="left:2384px;top:461.0px;background:#e9faef;"></div>
<div class="cellt" style="left:2384px;top:476.26px"><span>7</span></div>
<div class="cell" style="left:2618px;top:461.0px;background:#e9faef;"></div>
<div class="cellt" style="left:2618px;top:476.26px"><span>8</span><span class="chg" style="color:#e11d26"><svg width="12.8" height="7.8" viewBox="0 0 13 8" style="vertical-align:middle;margin-right:5px;position:relative;top:-1px"><path d="M1.200 1.200 H11.800 L6.500 6.800Z" fill="#e11d26" stroke="#e11d26" stroke-width="2" stroke-linejoin="round"/></svg>1</span></div>
<div class="cb" style="top:561.5px"></div>
<svg style="position:absolute;left:642.500px;top:568.5px" width="9" height="14" viewBox="0 0 9 14" fill="none" stroke="#191c2a" stroke-width="1.900"><path d="M1.500 1.800 L6.500 7 L1.500 12.200"/></svg>
<div class="kw hov" style="top:558.06px;letter-spacing:0.268px;">infant immunization schedule</div>
<svg style="position:absolute;left:1435.10px;top:555.40px" width="37.2" height="37.2" viewBox="0 0 24 24"><path fill="#808488" d="M3.9 12c0-1.71 1.39-3.1 3.1-3.1h4V7H7c-2.76 0-5 2.24-5 5s2.240 5 5 5h4v-1.900H7c-1.710 0-3.100-1.390-3.100-3.100zM8 13h8v-2H8v2zm9-6h-4v1.900h4c1.710 0 3.100 1.390 3.100 3.100s-1.390 3.100-3.100 3.100h-4V17h4c2.760 0 5-2.240 5-5s-2.240-5-5-5z"/></svg>
<div class="sv hov" style="top:557.26px;letter-spacing:-1.810px;left:1529.19px">33.1K</div>
<div class="fclip" style="top:534px"><svg style="position:absolute;left:-6.0px;top:31.0px" width="28" height="20" viewBox="0 0 28 20" fill="#adaec6"><rect x="0" y="1.200" width="28" height="2.600"/><rect x="9.200" y="8.300" width="18.800" height="3.500" rx="1"/><rect x="9.200" y="16" width="18.800" height="3"/></svg></div>
<div class="tf" style="top:557.26px">0</div>
<div class="dy" style="top:557.26px">0</div>
<div class="cell" style="left:2384px;top:542.0px;background:#fff;border:1px solid #d3d5de;"></div>
<div class="cellt" style="left:2384px;top:557.26px"><span>-</span></div>
<div class="cell" style="left:2618px;top:542.0px;background:#fff;border:1px solid #d3d5de;"></div>
<div class="cellt" style="left:2618px;top:557.26px"><span>-</span></div>
<div class="cb" style="top:642.5px"></div>
<svg style="position:absolute;left:642.500px;top:649.5px" width="9" height="14" viewBox="0 0 9 14" fill="none" stroke="#191c2a" stroke-width="1.900"><path d="M1.500 1.800 L6.500 7 L1.500 12.200"/></svg>
<div class="kw" style="top:639.06px;letter-spacing:0.238px;">best time to take lexapro for anxiety</div>
<svg style="position:absolute;left:1435.10px;top:636.40px" width="37.2" height="37.2" viewBox="0 0 24 24"><path fill="#1a6fd8" d="M3.9 12c0-1.71 1.39-3.1 3.1-3.1h4V7H7c-2.76 0-5 2.24-5 5s2.240 5 5 5h4v-1.900H7c-1.710 0-3.100-1.390-3.100-3.100zM8 13h8v-2H8v2zm9-6h-4v1.900h4c1.710 0 3.100 1.390 3.100 3.100s-1.390 3.100-3.100 3.100h-4V17h4c2.760 0 5-2.240 5-5s-2.240-5-5-5z"/></svg>
<div class="sv" style="top:638.26px;letter-spacing:-2.510px;left:1528.49px">27.1K</div>
<div class="fclip" style="top:615px"></div>
<div class="tf" style="top:638.26px">0</div>
<div class="dy" style="top:638.26px">0</div>
<div class="cellt" style="left:2384px;top:638.26px"><span>33</span></div>
<div class="cellt" style="left:2618px;top:638.26px"><span>33</span></div>
<div class="cb" style="top:723.5px"></div>
<svg style="position:absolute;left:642.500px;top:730.5px" width="9" height="14" viewBox="0 0 9 14" fill="none" stroke="#191c2a" stroke-width="1.900"><path d="M1.500 1.800 L6.500 7 L1.500 12.200"/></svg>
<div class="kw" style="top:720.06px;letter-spacing:-0.104px;">signs and symptoms of a blood clot in the leg</div>
<svg style="position:absolute;left:1423.20px;top:717.40px" width="37.2" height="37.2" viewBox="0 0 24 24"><path fill="#1a6fd8" d="M3.9 12c0-1.71 1.39-3.1 3.1-3.1h4V7H7c-2.76 0-5 2.24-5 5s2.240 5 5 5h4v-1.900H7c-1.710 0-3.100-1.390-3.100-3.100zM8 13h8v-2H8v2zm9-6h-4v1.900h4c1.710 0 3.100 1.390 3.100 3.100s-1.390 3.100-3.100 3.100h-4V17h4c2.760 0 5-2.240 5-5s-2.240-5-5-5z"/></svg>
<div class="two" style="top:723.22px">2</div>
<div class="sv" style="top:719.26px;letter-spacing:-2.510px;left:1528.49px">27.1K</div>
<div class="fclip" style="top:696px"><svg style="position:absolute;left:-7.0px;top:30.5px" width="30" height="21" viewBox="0 0 30 21"><rect width="30" height="21" rx="4.500" fill="#adaec6"/><path d="M11.800 5.800 L19.500 10.500 L11.800 15.200Z" fill="#fff"/></svg><svg style="position:absolute;left:40.5px;top:30.1px" width="28" height="22" viewBox="0 0 28 22" fill="#adaec6"><rect x="0" y="0.00" width="28" height="3.600" rx="0.800"/><rect x="0" y="6.05" width="28" height="3.600" rx="0.800"/><rect x="0" y="12.10" width="28" height="3.600" rx="0.800"/><rect x="0" y="18.15" width="28" height="3.600" rx="0.800"/></svg><svg style="position:absolute;left:84.4px;top:24.1px" width="33.2" height="33.4" viewBox="0 0 33.2 33.4" fill="none" stroke="#c0c1d5" stroke-width="2.600" stroke-linecap="round"><rect x="7.100" y="1.300" width="24.700" height="24.600" rx="3"/><path d="M1.300 7.500 V30 a2 2 0 0 0 2 2 H26.500"/><path d="M11.300 21.100 L15.300 16.200 L18 19.300 L21.800 14.600 L27.600 21.100Z" fill="#c0c1d5" stroke="none"/></svg></div>
<div class="tf" style="top:719.26px;letter-spacing:-1.723px;left:1888.28px">271</div>
<div class="pill" style="top:718px;border-color:#147a3f"></div>
<div class="dy" style="top:719.26px;color:#147a3f;padding-left:4px"><svg width="13.2" height="8" viewBox="0 0 13 8" style="vertical-align:middle;margin-right:4px;position:relative;top:-1px"><path d="M1.200 6.800 H11.800 L6.500 1.200Z" fill="#147a3f" stroke="#147a3f" stroke-width="2" stroke-linejoin="round"/></svg>1</div>
<div class="cellt" style="left:2384px;top:719.26px"><span>13</span></div>
<div class="cellt" style="left:2618px;top:719.26px"><span>12</span><span class="chg" style="color:#147a3f"><svg width="12.8" height="7.8" viewBox="0 0 13 8" style="vertical-align:middle;margin-right:5px;position:relative;top:-1px"><path d="M1.200 6.800 H11.800 L6.500 1.200Z" fill="#147a3f" stroke="#147a3f" stroke-width="2" stroke-linejoin="round"/></svg>1</span></div>
<div class="cb" style="top:804.5px"></div>
<svg style="position:absolute;left:642.500px;top:811.5px" width="9" height="14" viewBox="0 0 9 14" fill="none" stroke="#191c2a" stroke-width="1.900"><path d="M1.500 1.800 L6.500 7 L1.500 12.200"/></svg>
<div class="kw" style="top:801.06px;letter-spacing:0.128px;">normal range for white blood cells</div>
<svg style="position:absolute;left:1435.10px;top:798.40px" width="37.2" height="37.2" viewBox="0 0 24 24"><path fill="#1a6fd8" d="M3.9 12c0-1.71 1.39-3.1 3.1-3.1h4V7H7c-2.76 0-5 2.24-5 5s2.240 5 5 5h4v-1.900H7c-1.710 0-3.100-1.390-3.100-3.100zM8 13h8v-2H8v2zm9-6h-4v1.900h4c1.710 0 3.100 1.390 3.100 3.100s-1.390 3.100-3.100 3.100h-4V17h4c2.760 0 5-2.240 5-5s-2.240-5-5-5z"/></svg>
<div class="sv" style="top:800.26px;letter-spacing:0.040px;left:1531.04px">49.5K</div>
<div class="fclip" style="top:777px"><svg style="position:absolute;left:-6.0px;top:30.1px" width="28" height="22" viewBox="0 0 28 22" fill="#adaec6"><rect x="0" y="0.00" width="28" height="3.600" rx="0.800"/><rect x="0" y="6.05" width="28" height="3.600" rx="0.800"/><rect x="0" y="12.10" width="28" height="3.600" rx="0.800"/><rect x="0" y="18.15" width="28" height="3.600" rx="0.800"/></svg></div>
<div class="tf" style="top:800.26px">5.6K</div>
<div class="pill" style="top:799px;border-color:#e11d26"></div>
<div class="dy" style="top:800.26px;color:#e11d26;padding-left:4px"><svg width="13.2" height="8" viewBox="0 0 13 8" style="vertical-align:middle;margin-right:4px;position:relative;top:-1px"><path d="M1.200 1.200 H11.800 L6.500 6.800Z" fill="#e11d26" stroke="#e11d26" stroke-width="2" stroke-linejoin="round"/></svg>1</div>
<div class="cell" style="left:2384px;top:785.0px;background:#e9faef;"></div>
<div class="cellt" style="left:2384px;top:800.26px"><span>2</span></div>
<div class="cell" style="left:2618px;top:785.0px;background:#e9faef;"></div>
<div class="cellt" style="left:2618px;top:800.26px"><span>3</span><span class="chg" style="color:#e11d26"><svg width="12.8" height="7.8" viewBox="0 0 13 8" style="vertical-align:middle;margin-right:5px;position:relative;top:-1px"><path d="M1.200 1.200 H11.800 L6.500 6.800Z" fill="#e11d26" stroke="#e11d26" stroke-width="2" stroke-linejoin="round"/></svg>1</span></div>
<div class="cb" style="top:885.5px"></div>
<svg style="position:absolute;left:642.500px;top:892.5px" width="9" height="14" viewBox="0 0 9 14" fill="none" stroke="#191c2a" stroke-width="1.900"><path d="M1.500 1.800 L6.500 7 L1.500 12.200"/></svg>
<div class="kw" style="top:882.06px;letter-spacing:-0.233px;">how long does cannabis stay in your system</div>
<svg style="position:absolute;left:1435.10px;top:879.40px" width="37.2" height="37.2" viewBox="0 0 24 24"><path fill="#1a6fd8" d="M3.9 12c0-1.71 1.39-3.1 3.1-3.1h4V7H7c-2.76 0-5 2.24-5 5s2.240 5 5 5h4v-1.900H7c-1.710 0-3.100-1.390-3.100-3.100zM8 13h8v-2H8v2zm9-6h-4v1.900h4c1.710 0 3.100 1.390 3.100 3.100s-1.390 3.100-3.100 3.100h-4V17h4c2.760 0 5-2.240 5-5s-2.240-5-5-5z"/></svg>
<div class="sv" style="top:881.26px;letter-spacing:-2.510px;left:1528.49px">27.1K</div>
<div class="fclip" style="top:858px"><svg style="position:absolute;left:-6.0px;top:30.1px" width="28" height="22" viewBox="0 0 28 22" fill="#adaec6"><rect x="0" y="0.00" width="28" height="3.600" rx="0.800"/><rect x="0" y="6.05" width="28" height="3.600" rx="0.800"/><rect x="0" y="12.10" width="28" height="3.600" rx="0.800"/><rect x="0" y="18.15" width="28" height="3.600" rx="0.800"/></svg></div>
<div class="tf" style="top:881.26px;letter-spacing:-1.790px;left:1888.21px">3.1K</div>
<div class="dy" style="top:881.26px">0</div>
<div class="cell" style="left:2384px;top:866.0px;background:#e9faef;"></div>
<div class="cellt" style="left:2384px;top:881.26px"><span>3</span></div>
<div class="cell" style="left:2618px;top:866.0px;background:#e9faef;"></div>
<div class="cellt" style="left:2618px;top:881.26px"><span>3</span></div>
<div class="cb" style="top:966.5px"></div>
<svg style="position:absolute;left:642.500px;top:973.5px" width="9" height="14" viewBox="0 0 9 14" fill="none" stroke="#191c2a" stroke-width="1.900"><path d="M1.500 1.800 L6.500 7 L1.500 12.200"/></svg>
<div class="kw" style="top:963.06px;letter-spacing:-0.029px;">how soon will a pregnancy test read positive</div>
<svg style="position:absolute;left:1435.10px;top:960.40px" width="37.2" height="37.2" viewBox="0 0 24 24"><path fill="#1a6fd8" d="M3.9 12c0-1.71 1.39-3.1 3.1-3.1h4V7H7c-2.76 0-5 2.24-5 5s2.240 5 5 5h4v-1.900H7c-1.710 0-3.100-1.390-3.100-3.100zM8 13h8v-2H8v2zm9-6h-4v1.900h4c1.710 0 3.100 1.390 3.100 3.100s-1.390 3.100-3.100 3.100h-4V17h4c2.760 0 5-2.240 5-5s-2.240-5-5-5z"/></svg>
<div class="sv" style="top:962.26px;letter-spacing:-0.535px;left:1530.46px">22.2K</div>
<div class="fclip" style="top:939px"><svg style="position:absolute;left:-7.0px;top:30.5px" width="30" height="21" viewBox="0 0 30 21"><rect width="30" height="21" rx="4.500" fill="#adaec6"/><path d="M11.800 5.800 L19.500 10.500 L11.800 15.200Z" fill="#fff"/></svg><svg style="position:absolute;left:40.5px;top:30.1px" width="28" height="22" viewBox="0 0 28 22" fill="#adaec6"><rect x="0" y="0.00" width="28" height="3.600" rx="0.800"/><rect x="0" y="6.05" width="28" height="3.600" rx="0.800"/><rect x="0" y="12.10" width="28" height="3.600" rx="0.800"/><rect x="0" y="18.15" width="28" height="3.600" rx="0.800"/></svg></div>
<div class="tf" style="top:962.26px">3.9K</div>
<div class="dy" style="top:962.26px">0</div>
<div class="cell" style="left:2384px;top:947.0px;background:#e9faef;"></div>
<div class="cellt" style="left:2384px;top:962.26px"><span>2</span></div>
<div class="cell" style="left:2618px;top:947.0px;background:#e9faef;"></div>
<div class="cellt" style="left:2618px;top:962.26px"><span>2</span></div>
<div class="cb" style="top:1047.5px"></div>
<svg style="position:absolute;left:642.500px;top:1054.5px" width="9" height="14" viewBox="0 0 9 14" fill="none" stroke="#191c2a" stroke-width="1.900"><path d="M1.500 1.800 L6.500 7 L1.500 12.200"/></svg>
<div class="kw" style="top:1044.06px;letter-spacing:0.019px;">how much does an abortion cost</div>
<svg style="position:absolute;left:1435.10px;top:1041.40px" width="37.2" height="37.2" viewBox="0 0 24 24"><path fill="#1a6fd8" d="M3.9 12c0-1.71 1.39-3.1 3.1-3.1h4V7H7c-2.76 0-5 2.24-5 5s2.240 5 5 5h4v-1.900H7c-1.710 0-3.100-1.390-3.100-3.100zM8 13h8v-2H8v2zm9-6h-4v1.900h4c1.710 0 3.100 1.390 3.100 3.100s-1.390 3.100-3.100 3.100h-4V17h4c2.760 0 5-2.240 5-5s-2.240-5-5-5z"/></svg>
<div class="sv" style="top:1043.26px;letter-spacing:-2.510px;left:1528.49px">27.1K</div>
<div class="fclip" style="top:1020px"></div>
<div class="tf" style="top:1043.26px">704.6</div>
<div class="dy" style="top:1043.26px">0</div>
<div class="cell" style="left:2384px;top:1028.0px;background:#e9faef;"></div>
<div class="cellt" style="left:2384px;top:1043.26px"><span>9</span></div>
<div class="cell" style="left:2618px;top:1028.0px;background:#e9faef;"></div>
<div class="cellt" style="left:2618px;top:1043.26px"><span>9</span></div>
<div class="cb" style="top:1128.5px"></div>
<svg style="position:absolute;left:642.500px;top:1135.5px" width="9" height="14" viewBox="0 0 9 14" fill="none" stroke="#191c2a" stroke-width="1.900"><path d="M1.500 1.800 L6.500 7 L1.500 12.200"/></svg>
<div class="kw" style="top:1125.06px;letter-spacing:0.003px;">what does a heart attack feel like</div>
<svg style="position:absolute;left:1435.10px;top:1122.40px" width="37.2" height="37.2" viewBox="0 0 24 24"><path fill="#1a6fd8" d="M3.9 12c0-1.71 1.39-3.1 3.1-3.1h4V7H7c-2.76 0-5 2.24-5 5s2.240 5 5 5h4v-1.900H7c-1.710 0-3.100-1.390-3.100-3.100zM8 13h8v-2H8v2zm9-6h-4v1.900h4c1.710 0 3.100 1.390 3.100 3.100s-1.390 3.100-3.100 3.100h-4V17h4c2.760 0 5-2.240 5-5s-2.240-5-5-5z"/></svg>
<div class="sv" style="top:1124.26px;letter-spacing:-2.510px;left:1528.49px">27.1K</div>
<div class="fclip" style="top:1101px"><svg style="position:absolute;left:-6.0px;top:30.1px" width="28" height="22" viewBox="0 0 28 22" fill="#adaec6"><rect x="0" y="0.00" width="28" height="3.600" rx="0.800"/><rect x="0" y="6.05" width="28" height="3.600" rx="0.800"/><rect x="0" y="12.10" width="28" height="3.600" rx="0.800"/><rect x="0" y="18.15" width="28" height="3.600" rx="0.800"/></svg><svg style="position:absolute;left:39.5px;top:30.5px" width="30" height="21" viewBox="0 0 30 21"><rect width="30" height="21" rx="4.500" fill="#adaec6"/><path d="M11.800 5.800 L19.500 10.500 L11.800 15.200Z" fill="#fff"/></svg><div style="position:absolute;left:83.5px;top:22.8px;width:36px;height:36px;box-sizing:border-box;border:1px solid #cfd2e0;border-radius:6px"></div><svg style="position:absolute;left:91.5px;top:38.5px" width="20" height="5" viewBox="0 0 20 5" fill="#666d78"><circle cx="2.500" cy="2.500" r="2.300"/><circle cx="10" cy="2.500" r="2.300"/><circle cx="17.500" cy="2.500" r="2.300"/></svg></div>
<div class="tf" style="top:1124.26px;letter-spacing:-1.723px;left:1888.28px">271</div>
<div class="pill" style="top:1123px;border-color:#e11d26"></div>
<div class="dy" style="top:1124.26px;color:#e11d26;padding-left:4px"><svg width="13.2" height="8" viewBox="0 0 13 8" style="vertical-align:middle;margin-right:4px;position:relative;top:-1px"><path d="M1.200 1.200 H11.800 L6.500 6.800Z" fill="#e11d26" stroke="#e11d26" stroke-width="2" stroke-linejoin="round"/></svg>13</div>
<div class="cell" style="left:2384px;top:1109.0px;background:#e9faef;"></div>
<div class="cellt" style="left:2384px;top:1124.26px"><span>10</span></div>
<div class="cell" style="left:2618px;top:1109.0px;background:#ffe4e6;"></div>
<div class="cellt" style="left:2618px;top:1124.26px"><span>23</span><span class="chg" style="color:#e11d26"><svg width="12.8" height="7.8" viewBox="0 0 13 8" style="vertical-align:middle;margin-right:5px;position:relative;top:-1px"><path d="M1.200 1.200 H11.800 L6.500 6.800Z" fill="#e11d26" stroke="#e11d26" stroke-width="2" stroke-linejoin="round"/></svg>13</span></div>
<div class="cb" style="top:1209.5px"></div>
<svg style="position:absolute;left:642.500px;top:1216.5px" width="9" height="14" viewBox="0 0 9 14" fill="none" stroke="#191c2a" stroke-width="1.900"><path d="M1.500 1.800 L6.500 7 L1.500 12.200"/></svg>
<div class="kw" style="top:1206.06px;letter-spacing:0.187px;">what is the strongest weight loss prescription pill</div>
<svg style="position:absolute;left:1435.10px;top:1203.40px" width="37.2" height="37.2" viewBox="0 0 24 24"><path fill="#1a6fd8" d="M3.9 12c0-1.71 1.39-3.1 3.1-3.1h4V7H7c-2.76 0-5 2.24-5 5s2.240 5 5 5h4v-1.900H7c-1.710 0-3.100-1.390-3.100-3.100zM8 13h8v-2H8v2zm9-6h-4v1.900h4c1.710 0 3.100 1.390 3.100 3.100s-1.390 3.100-3.100 3.100h-4V17h4c2.760 0 5-2.240 5-5s-2.240-5-5-5z"/></svg>
<div class="sv" style="top:1205.26px;letter-spacing:-2.510px;left:1528.49px">27.1K</div>
<div class="fclip" style="top:1182px"><svg style="position:absolute;left:-8.5px;top:23.8px" width="34" height="34" viewBox="0 0 24 24"><path fill="#adaec6" d="M12 17.270L18.180 21l-1.640-7.030L22 9.240l-7.190-.610L12 2 9.190 8.630 2 9.240l5.460 4.730L5.820 21z"/></svg><svg style="position:absolute;left:39.5px;top:30.5px" width="30" height="21" viewBox="0 0 30 21"><rect width="30" height="21" rx="4.500" fill="#adaec6"/><path d="M11.800 5.800 L19.500 10.500 L11.800 15.200Z" fill="#fff"/></svg><svg style="position:absolute;left:87.0px;top:30.1px" width="28" height="22" viewBox="0 0 28 22" fill="#adaec6"><rect x="0" y="0.00" width="28" height="3.600" rx="0.800"/><rect x="0" y="6.05" width="28" height="3.600" rx="0.800"/><rect x="0" y="12.10" width="28" height="3.600" rx="0.800"/><rect x="0" y="18.15" width="28" height="3.600" rx="0.800"/></svg></div>
<div class="tf" style="top:1205.26px;letter-spacing:-1.723px;left:1888.28px">271</div>
<div class="pill" style="top:1204px;border-color:#147a3f"></div>
<div class="dy" style="top:1205.26px;color:#147a3f;padding-left:4px"><svg width="13.2" height="8" viewBox="0 0 13 8" style="vertical-align:middle;margin-right:4px;position:relative;top:-1px"><path d="M1.200 6.800 H11.800 L6.500 1.200Z" fill="#147a3f" stroke="#147a3f" stroke-width="2" stroke-linejoin="round"/></svg>10</div>
<div class="cellt" style="left:2384px;top:1205.26px"><span>26</span></div>
<div class="cellt" style="left:2618px;top:1205.26px"><span>16</span><span class="chg" style="color:#147a3f"><svg width="12.8" height="7.8" viewBox="0 0 13 8" style="vertical-align:middle;margin-right:5px;position:relative;top:-1px"><path d="M1.200 6.800 H11.800 L6.500 1.200Z" fill="#147a3f" stroke="#147a3f" stroke-width="2" stroke-linejoin="round"/></svg>10</span></div>
<div class="cb" style="top:1290.5px"></div>
<svg style="position:absolute;left:642.500px;top:1297.5px" width="9" height="14" viewBox="0 0 9 14" fill="none" stroke="#191c2a" stroke-width="1.900"><path d="M1.500 1.800 L6.500 7 L1.500 12.200"/></svg>
<div class="kw" style="top:1287.06px;letter-spacing:-0.141px;">natural ways to decrease blood pressure</div>
<svg style="position:absolute;left:1435.10px;top:1284.40px" width="37.2" height="37.2" viewBox="0 0 24 24"><path fill="#1a6fd8" d="M3.9 12c0-1.71 1.39-3.1 3.1-3.1h4V7H7c-2.76 0-5 2.24-5 5s2.240 5 5 5h4v-1.900H7c-1.710 0-3.100-1.390-3.100-3.100zM8 13h8v-2H8v2zm9-6h-4v1.900h4c1.710 0 3.100 1.390 3.100 3.100s-1.390 3.100-3.100 3.100h-4V17h4c2.760 0 5-2.240 5-5s-2.240-5-5-5z"/></svg>
<div class="sv" style="top:1286.26px;letter-spacing:-2.510px;left:1528.49px">18.1K</div>
<div class="fclip" style="top:1263px"><svg style="position:absolute;left:-6.0px;top:30.1px" width="28" height="22" viewBox="0 0 28 22" fill="#adaec6"><rect x="0" y="0.00" width="28" height="3.600" rx="0.800"/><rect x="0" y="6.05" width="28" height="3.600" rx="0.800"/><rect x="0" y="12.10" width="28" height="3.600" rx="0.800"/><rect x="0" y="18.15" width="28" height="3.600" rx="0.800"/></svg><svg style="position:absolute;left:37.9px;top:24.1px" width="33.2" height="33.4" viewBox="0 0 33.2 33.4" fill="none" stroke="#c0c1d5" stroke-width="2.600" stroke-linecap="round"><rect x="7.100" y="1.300" width="24.700" height="24.600" rx="3"/><path d="M1.300 7.500 V30 a2 2 0 0 0 2 2 H26.500"/><path d="M11.300 21.100 L15.300 16.200 L18 19.300 L21.800 14.600 L27.600 21.100Z" fill="#c0c1d5" stroke="none"/></svg></div>
<div class="tf" style="top:1286.26px">633.5</div>
<div class="dy" style="top:1286.26px">0</div>
<div class="cell" style="left:2384px;top:1271.0px;background:#e9faef;"></div>
<div class="cellt" style="left:2384px;top:1286.26px"><span>7</span></div>
<div class="cell" style="left:2618px;top:1271.0px;background:#e9faef;"></div>
<div class="cellt" style="left:2618px;top:1286.26px"><span>7</span></div>
<div class="cb" style="top:1371.5px"></div>
<svg style="position:absolute;left:642.500px;top:1378.5px" width="9" height="14" viewBox="0 0 9 14" fill="none" stroke="#191c2a" stroke-width="1.900"><path d="M1.500 1.800 L6.500 7 L1.500 12.200"/></svg>
<div class="kw" style="top:1368.06px;">what does a blood clot feel like</div>
<svg style="position:absolute;left:1435.10px;top:1365.40px" width="37.2" height="37.2" viewBox="0 0 24 24"><path fill="#1a6fd8" d="M3.9 12c0-1.71 1.39-3.1 3.1-3.1h4V7H7c-2.76 0-5 2.24-5 5s2.240 5 5 5h4v-1.900H7c-1.710 0-3.100-1.390-3.100-3.100zM8 13h8v-2H8v2zm9-6h-4v1.900h4c1.710 0 3.100 1.390 3.100 3.100s-1.390 3.100-3.100 3.100h-4V17h4c2.760 0 5-2.240 5-5s-2.240-5-5-5z"/></svg>
<div class="sv" style="top:1367.26px;letter-spacing:-2.510px;left:1528.49px">18.1K</div>
<div class="fclip" style="top:1344px"><svg style="position:absolute;left:-6.0px;top:30.1px" width="28" height="22" viewBox="0 0 28 22" fill="#adaec6"><rect x="0" y="0.00" width="28" height="3.600" rx="0.800"/><rect x="0" y="6.05" width="28" height="3.600" rx="0.800"/><rect x="0" y="12.10" width="28" height="3.600" rx="0.800"/><rect x="0" y="18.15" width="28" height="3.600" rx="0.800"/></svg></div>
<div class="tf" style="top:1367.26px">1.5K</div>
<div class="dy" style="top:1367.26px">0</div>
<div class="cell" style="left:2384px;top:1352.0px;background:#e9faef;"></div>
<div class="cellt" style="left:2384px;top:1367.26px"><span>4</span></div>
<div class="cell" style="left:2618px;top:1352.0px;background:#e9faef;"></div>
<div class="cellt" style="left:2618px;top:1367.26px"><span>4</span></div>

<!-- hovered row borders + red highlight -->
<div class="abs" style="left:565px;top:535px;width:2279px;height:2px;background:#d6d9e7"></div>
<div class="abs" style="left:565px;top:614px;width:2279px;height:2px;background:#d6d9e7"></div>
<div class="abs" style="left:1387px;top:531px;width:132px;height:81px;border:6px solid #ff2600;border-radius:4px"></div>
<!-- bottom fade -->
<div class="abs" style="left:529px;top:1336px;width:2250px;height:42px;background:linear-gradient(to bottom,rgba(70,70,80,0),rgba(70,70,80,.04) 40%,rgba(70,70,80,.115));-webkit-mask-image:linear-gradient(to right,#000 82%,transparent);mask-image:linear-gradient(to right,#000 82%,transparent)"></div>
<!-- chat bubble -->
<div class="abs" style="left:2720px;top:1191px;width:115px;height:115px;border-radius:50%;background:#0866ff;box-shadow:0 10px 40px rgba(10,30,20,.2)"></div>
<div class="abs" style="left:2748.700px;top:1231px;width:57.700px;height:29.200px;border-radius:15px;background:#fff"></div>
<svg class="abs" style="left:2782.500px;top:1265.600px" width="13" height="12" viewBox="0 0 13 12"><path d="M0 0 H12.500 V11.500Z" fill="#fff"/></svg>
</div>
</body></html>
